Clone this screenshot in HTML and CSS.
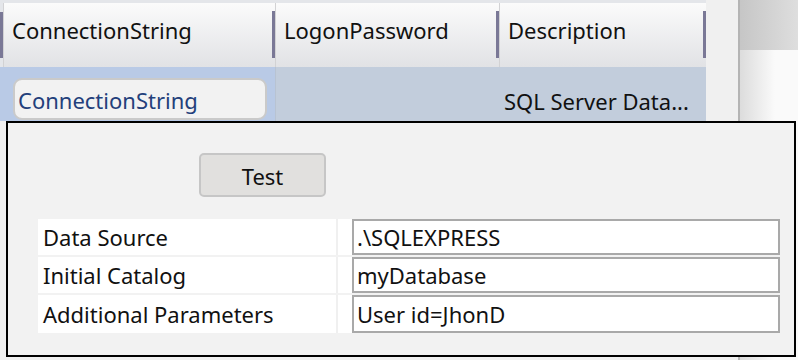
FILE: index.html
```html
<!DOCTYPE html>
<html lang="en">
<head>
    <meta charset="UTF-8" />
    <title>Connection Editor</title>
    <link rel="stylesheet" href="styles.css">
</head>
<body>
    <div class="window">
        <div class="grid">
            <div class="grid-header">
                <div class="col col-1"><span>ConnectionString</span></div>
                <div class="col col-2"><span>LogonPassword</span></div>
                <div class="col col-3"><span>Description</span></div>
            </div>
            <div class="grid-row">
                <div class="cell cell-1 selected">
                    <div class="editor">ConnectionString</div>
                </div>
                <div class="cell cell-2"></div>
                <div class="cell cell-3">SQL Server Data...</div>
            </div>
        </div>
        <div class="gutter"></div>
        <div class="side">
            <div class="side-top"></div>
            <div class="side-bottom"></div>
        </div>
    </div>

    <div class="popup">
        <div class="popup-actions">
            <button type="button" class="btn">Test</button>
        </div>
        <div class="props">
            <div class="prop">
                <div class="prop-name">Data Source</div>
                <div class="prop-sep"></div>
                <div class="prop-value"><div class="value-box">.\SQLEXPRESS</div></div>
            </div>
            <div class="prop">
                <div class="prop-name">Initial Catalog</div>
                <div class="prop-sep"></div>
                <div class="prop-value"><div class="value-box">myDatabase</div></div>
            </div>
            <div class="prop">
                <div class="prop-name">Additional Parameters</div>
                <div class="prop-sep"></div>
                <div class="prop-value"><div class="value-box">User id=JhonD</div></div>
            </div>
        </div>
    </div>
</body>
</html>
```

FILE: styles.css
```css
:root {
    --panel: #f2f2f2;
    --text: #111111;
    --grid-line: #d2d2d4;
    --splitter: #7a7896;
    --selected: #b9cae6;
    --row: #c2cddc;
}

* {
    box-sizing: border-box;
}

body {
    margin: 0;
    width: 798px;
    height: 360px;
    overflow: hidden;
    background-color: #f0f0f0;
    font-family: 'Noto Sans', 'Open Sans', sans-serif;
    font-size: 22px;
    color: var(--text);
    position: relative;
}

.window {
    display: flex;
    height: 360px;
}

.grid {
    width: 706px;
    padding-top: 3px;
    background-color: #e4e6ea;
    display: flex;
    flex-direction: column;
    height: 121px;
}

.grid-header {
    display: flex;
    height: 64px;
    padding-left: 3px;
    position: relative;
}

.grid-header::before {
    content: "";
    position: absolute;
    left: 0;
    top: 9px;
    bottom: 9px;
    width: 3px;
    background-color: var(--splitter);
}

.col {
    height: 100%;
    display: flex;
    align-items: center;
    padding-left: 8px;
    background: linear-gradient(#fbfbfb, #e1e2e5);
    border-left: 1px solid var(--grid-line);
    position: relative;
    white-space: nowrap;
}

.col::after {
    content: "";
    position: absolute;
    right: 0;
    top: 8px;
    bottom: 9px;
    width: 3px;
    background-color: var(--splitter);
}

.col span {
    margin-top: -11px;
}

.col-1 { width: 272px; }
.col-2 { width: 224px; }
.col-3 { width: 207px; }

.grid-row {
    display: flex;
    flex: 1;
}

.cell {
    background-color: var(--row);
    display: flex;
    align-items: center;
    white-space: nowrap;
}

.cell-1 {
    width: 275px;
    padding-left: 13px;
}

.cell-2 {
    width: 224px;
    border-left: 1px solid #b8c3d2;
}

.cell-3 {
    flex: 1;
    padding-left: 5px;
    padding-top: 14px;
}

.cell.selected {
    background-color: var(--selected);
}

.editor {
    width: 254px;
    height: 42px;
    margin-top: 10px;
    padding: 2px 0 0 3px;
    background-color: var(--panel);
    border: 2px solid #cacaca;
    border-radius: 9px;
    color: #233f7b;
    display: flex;
    align-items: center;
}

.gutter {
    width: 34px;
    background-color: #f0f0f0;
    border-right: 2px solid #b4b4b4;
}

.side {
    flex: 1;
    display: flex;
    flex-direction: column;
}

.side-top {
    height: 50px;
    background: linear-gradient(90deg, #c6c6c6, #dedede);
}

.side-bottom {
    flex: 1;
    background: linear-gradient(90deg, #dcdcdc, #fafafa 60%);
}

.popup {
    position: absolute;
    left: 6px;
    top: 121px;
    width: 790px;
    height: 236px;
    background-color: var(--panel);
    border: 2px solid #000;
    padding: 30px 14px 0 30px;
}

.popup-actions {
    padding-left: 161px;
}

.btn {
    width: 127px;
    height: 44px;
    background-color: #e1e0de;
    border: 2px solid #c6c6c6;
    border-radius: 5px;
    font-family: inherit;
    font-size: 22px;
    color: var(--text);
    padding: 2px 0 0;
}

.props {
    margin-top: 22px;
    display: flex;
    flex-direction: column;
    gap: 2px;
}

.prop {
    display: flex;
    height: 36px;
}

.prop:last-child {
    height: 38px;
}

.prop-name {
    width: 298px;
    background-color: #fff;
    padding-left: 5px;
    display: flex;
    align-items: center;
}

.prop-sep {
    width: 2px;
    background-color: #f0f0f0;
}

.prop-value {
    flex: 1;
    background-color: #fff;
    padding-left: 14px;
}

.value-box {
    height: 100%;
    border: 2px solid #a9a9a9;
    padding-left: 3px;
    display: flex;
    align-items: center;
}
```
